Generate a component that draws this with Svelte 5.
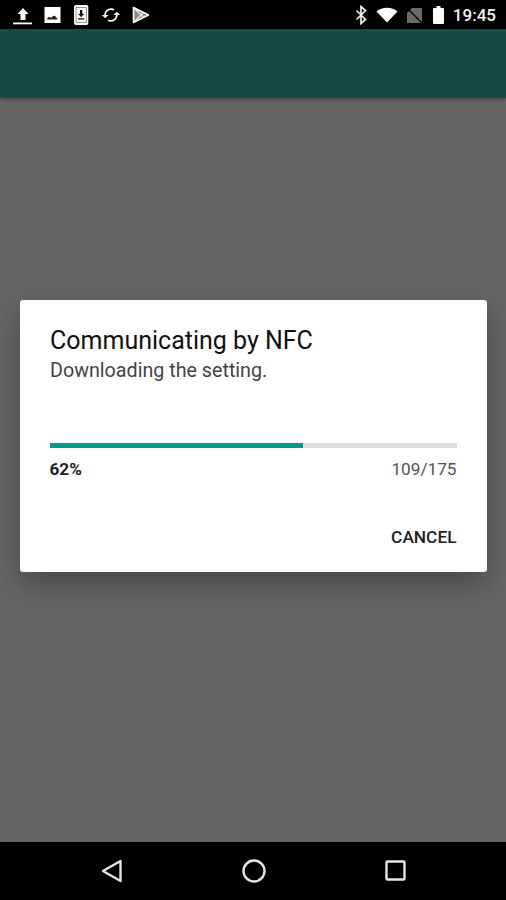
<script lang="ts">
  let percent = 62
  let done = 109
  let total = 175
  let ratio = (done / total) * 100
</script>

<div class="screen">
  <div class="status-bar">
    <div class="notifications">
      <svg width="21" height="22" viewBox="0 0 21 22" fill="#fff">
        <path d="M8.500 16V10H5.500L11 4l5.500 6H13.500v6z" />
        <rect x="1" y="18.500" width="19" height="1.800" />
      </svg>
      <svg width="19" height="18" viewBox="0 0 19 18">
        <path fill="#fff" d="M1.500 1h16v16h-16z" />
        <path fill="#222" d="M4 13.500c.3-1.500 1-2.500 2-2.500s1.300.8 2 .8 1.500-2 3-2 2.800 2 3.500 3.700z" />
      </svg>
      <svg width="19" height="22" viewBox="0 0 19 22">
        <rect x="2" y="1" width="14.300" height="20" rx="2" fill="#fff" />
        <rect x="4" y="3.500" width="10.300" height="15" fill="#fff" stroke="#777" stroke-width=".8" />
        <path fill="#111" d="M8 6h2.300v3.800h2L9.150 13.200 6 9.800h2zM6 14.300h6.300v1.300H6z" />
      </svg>
      <svg width="20" height="20" viewBox="0 0 24 24" fill="#fff">
        <path d="M19 8l-4 4h3c0 3.310-2.690 6-6 6-1.010 0-1.970-.25-2.800-.7l-1.460 1.460C8.970 19.540 10.430 20 12 20c4.420 0 8-3.580 8-8h3l-4-4zM6 12c0-3.310 2.690-6 6-6 1.010 0 1.970.25 2.800.7l1.460-1.460C15.030 4.460 13.570 4 12 4c-4.420 0-8 3.580-8 8H1l4 4 4-4H6z" />
      </svg>
      <svg width="20" height="20" viewBox="0 0 20 20">
        <path fill="#8a8a8a" d="M2 2l16 8-16 8z" />
        <path fill="none" stroke="#fff" stroke-width="1.600" stroke-linejoin="round" d="M2.500 2.500L17.500 10 2.500 17.500z" />
        <path fill="none" stroke="#eee" stroke-width="1.200" d="M3 3l7 7-7 7M13 7.500L10 10l3 2.500" />
      </svg>
    </div>
    <div class="system">
      <svg width="14" height="20" viewBox="0 0 14 20" fill="none" stroke="#eee" stroke-width="1.700">
        <path d="M3.500 5.500l9 9L8 18.500V1.500l4.500 4-9 9" />
      </svg>
      <svg width="22" height="16" viewBox="0 0 22 16">
        <path fill="#fff" d="M0.500 4.500C3.500 2 7 .8 11 .8s7.500 1.200 10.500 3.700L11 15.500z" />
      </svg>
      <svg width="17" height="17" viewBox="0 0 17 17">
        <path fill="#6a6a6a" d="M5 1h10v15H0V6z" />
        <path stroke="#000" stroke-width="1.200" d="M.5 1.500l14.500 14.500" />
      </svg>
      <svg width="11" height="18" viewBox="0 0 11 18">
        <path fill="#fff" d="M3.500 0h4v2H10a1 1 0 0 1 1 1v14a1 1 0 0 1-1 1H1a1 1 0 0 1-1-1V3a1 1 0 0 1 1-1h2.500z" />
      </svg>
      <span class="clock">19:45</span>
    </div>
  </div>

  <div class="content">
    <div class="app-bar"></div>
    <div class="scrim">
      <div class="dialog">
        <h1>Communicating by NFC</h1>
        <p class="message">Downloading the setting.</p>
        <div class="track">
          <div class="fill" style="width: {ratio}%"></div>
        </div>
        <div class="progress-row">
          <span class="percent">{percent}%</span>
          <span class="count">{done}/{total}</span>
        </div>
        <div class="actions">
          <span class="cancel">CANCEL</span>
        </div>
      </div>
    </div>
  </div>

  <div class="nav-bar">
    <svg width="24" height="26" viewBox="0 0 24 26" fill="none" stroke="#e6e6e6" stroke-width="2.400" stroke-linejoin="round">
      <path d="M20.500 3v20L3 13z" />
    </svg>
    <svg width="26" height="26" viewBox="0 0 26 26" fill="none" stroke="#e6e6e6" stroke-width="2.400">
      <circle cx="13" cy="13" r="10.500" />
    </svg>
    <svg width="24" height="24" viewBox="0 0 24 24" fill="none" stroke="#e6e6e6" stroke-width="2.400" stroke-linejoin="round">
      <rect x="2.500" y="2.500" width="18" height="18" rx="1" />
    </svg>
  </div>
</div>

<style>
  :global(body) {
    background: #000;
    font-family: Roboto, "Liberation Sans", sans-serif;
  }
  .screen {
    display: flex;
    flex-direction: column;
    width: 506px;
    height: 900px;
    overflow: hidden;
    background: #fff;
  }
  .status-bar {
    display: flex;
    align-items: center;
    justify-content: space-between;
    flex: none;
    height: 29px;
    padding: 1px 10px 0 12px;
    box-sizing: border-box;
    background: #000;
  }
  .notifications,
  .system {
    display: flex;
    align-items: center;
  }
  .notifications {
    gap: 10px;
  }
  .system {
    gap: 9px;
  }
  .clock {
    color: #f2f2f2;
    font-size: 17px;
    font-weight: 500;
  }
  .content {
    position: relative;
    flex: 1;
    background: #fff;
  }
  .app-bar {
    height: 69px;
    background: #30b9af;
    box-shadow: 0 2px 4px rgba(0, 0, 0, 0.3);
  }
  .scrim {
    position: absolute;
    inset: 0;
    display: flex;
    align-items: center;
    justify-content: center;
    background: rgba(0, 0, 0, 0.6);
  }
  .dialog {
    box-sizing: border-box;
    width: 467px;
    height: 272px;
    padding: 27px 30px 0;
    border-radius: 3px;
    background: #fff;
    box-shadow: 0 12px 30px rgba(0, 0, 0, 0.3);
  }
  h1 {
    margin: 0;
    padding-left: 0.5px;
    color: #111;
    font-size: 25px;
    font-weight: 400;
    line-height: 28px;
  }
  .message {
    margin: 3px 0 0;
    padding-left: 0.5px;
    color: #444;
    font-size: 19.700px;
    line-height: 26px;
  }
  .track {
    height: 5px;
    margin-top: 59px;
    background: #dcdcdc;
  }
  .fill {
    height: 100%;
    background: #009b8c;
  }
  .progress-row {
    display: flex;
    justify-content: space-between;
    margin-top: 11px;
    font-size: 17.200px;
    line-height: 20px;
  }
  .percent {
    color: #222;
    font-weight: 700;
  }
  .count {
    color: #555;
  }
  .actions {
    display: flex;
    justify-content: flex-end;
    margin-top: 48px;
  }
  .cancel {
    color: #222;
    font-size: 17.300px;
    font-weight: 500;
    line-height: 20px;
  }
  .nav-bar {
    display: flex;
    align-items: center;
    justify-content: center;
    gap: 117px;
    flex: none;
    height: 58px;
    padding-left: 2px;
    background: #000;
  }
</style>
